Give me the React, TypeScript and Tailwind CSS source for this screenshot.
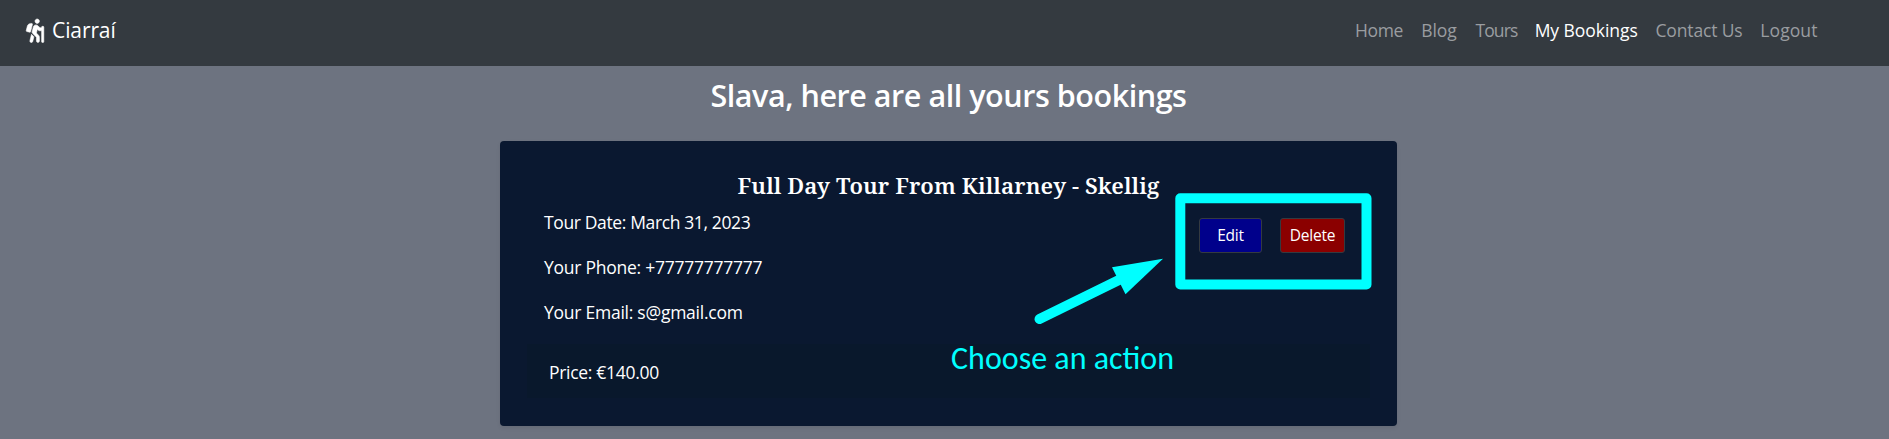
import { FaHiking } from 'react-icons/fa';

const links = [
  { label: 'Home', style: 'w-[66.2px] tracking-[-0.35px]' },
  { label: 'Blog', style: 'w-[54.3px] tracking-[-0.1px]' },
  { label: 'Tours', style: 'w-[59.2px] tracking-[-0.9px]' },
  { label: 'My Bookings', style: 'w-[120.8px] tracking-[-0.05px]', active: true },
  { label: 'Contact Us', style: 'w-[104.8px] tracking-[-0.15px]' },
  { label: 'Logout', style: 'tracking-[0.1px]' },
];

function Navbar() {
  return (
    <nav className="flex h-[66px] items-start justify-between bg-[#343a40] pl-[26px]">
      <a href="#" className="mt-[15px] flex h-[32px] items-center gap-[8px] text-[21px] tracking-[-0.1px] text-white">
        <FaHiking className="h-[23.5px] w-[18px] overflow-visible stroke-white [stroke-width:12px]" />
        Ciarraí
      </a>
      <div className="mt-[17px] flex w-[534px] text-[17.5px] leading-[27px] text-[#9a9da0]">
        {links.map((l) => (
          <a key={l.label} href="#" className={`shrink-0 whitespace-nowrap ${l.style} ${l.active ? 'text-white' : ''}`}>
            {l.label}
          </a>
        ))}
      </div>
    </nav>
  );
}

function Callout() {
  return (
    <>
      <svg className="pointer-events-none absolute left-[675px] top-[52px] h-[97px] w-[197px]" viewBox="0 0 197 97">
        <rect x="5.3" y="5.3" width="186.2" height="86.2" fill="none" stroke="#00ffff" strokeWidth="10" strokeLinejoin="round" />
      </svg>
      <svg className="pointer-events-none absolute left-[530px] top-[113px] h-[75px] w-[140px]" viewBox="0 0 140 75">
        <path d="M9.5 65 L92 24.500" stroke="#00ffff" strokeWidth="10" strokeLinecap="round" />
        <path d="M133 4.8 L82 13.3 L95.500 40.3 Z" fill="#00ffff" />
      </svg>
      <p className="absolute left-[451px] top-[198px] whitespace-nowrap font-[Carlito,Lato,sans-serif] text-[32px] leading-[40px] text-[#00ffff]">
        Choose an action
      </p>
    </>
  );
}

function BookingCard() {
  return (
    <section className="relative mx-auto h-[285px] w-[897px] translate-x-[4px] rounded-[4px] bg-[#0a1830] px-[27px] pt-[27px] shadow-[0_2px_4px_rgba(0,0,0,0.075)]">
      <h2 className="pt-[4px] text-center font-['Noto_Serif',serif] text-[22.5px] font-semibold leading-[27px] tracking-[0.07px]">
        Full Day Tour From Killarney - Skellig
      </h2>
      <div className="flex justify-between pl-[17px] pr-[25px] pt-[10px]">
        <div className="flex flex-col gap-[18px] text-[17.5px] leading-[27px]">
          <p className="tracking-[-0.37px]">Tour Date: March 31, 2023</p>
          <p className="tracking-[-0.25px]">Your Phone: +77777777777</p>
          <p className="tracking-[-0.25px]">Your Email: s@gmail.com</p>
        </div>
        <div className="flex gap-[18px] pt-[9px] text-[15.5px] tracking-[-0.2px]">
          <button className="h-[35px] w-[63px] rounded-[3px] border border-[#343a40] bg-[#00008b]">Edit</button>
          <button className="h-[35px] w-[65px] rounded-[3px] border border-[#343a40] bg-[#8b0000]">Delete</button>
        </div>
      </div>
      <div className="mt-[18px] h-[54px] bg-[#09182c] pl-[22px] pt-[15px] text-[17.5px] leading-[27px] tracking-[-0.3px]">
        Price: €140.00
      </div>
      <Callout />
    </section>
  );
}

export default function App() {
  return (
    <div className="h-[439px] overflow-hidden bg-[#6d7380] font-['Open_Sans',sans-serif] text-white">
      <Navbar />
      <h1 className="h-[75px] translate-x-[4px] pt-[9px] text-center text-[30.5px] font-semibold leading-[40px] tracking-[-0.45px]">
        Slava, here are all yours bookings
      </h1>
      <BookingCard />
    </div>
  );
}
